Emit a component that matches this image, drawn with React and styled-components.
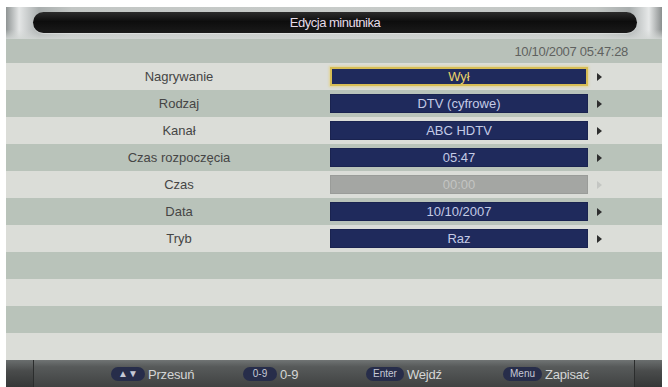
import styled, { createGlobalStyle } from "styled-components";

const GlobalStyle = createGlobalStyle`
  html, body {
    margin: 0;
    padding: 0;
    background: #ffffff;
  }
  body {
    font-family: "Liberation Sans", Arial, sans-serif;
  }
`;

const rows = [
  { label: "Nagrywanie", value: "Wył", focused: true },
  { label: "Rodzaj", value: "DTV (cyfrowe)" },
  { label: "Kanał", value: "ABC HDTV" },
  { label: "Czas rozpoczęcia", value: "05:47" },
  { label: "Czas", value: "00:00", disabled: true },
  { label: "Data", value: "10/10/2007" },
  { label: "Tryb", value: "Raz" },
];

const hints = [
  { key: "▲▼", text: "Przesuń" },
  { key: "0-9", text: "0-9" },
  { key: "Enter", text: "Wejdź" },
  { key: "Menu", text: "Zapisać" },
];

export default function App() {
  const emptyRows = [0, 1, 2, 3];
  return (
    <>
      <GlobalStyle />
      <Page>
        <Screen>
          <Header>
            <TitleBar>Edycja minutnika</TitleBar>
          </Header>
          <ClockRow>10/10/2007 05:47:28</ClockRow>
          {rows.map((row, i) => (
            <Row key={row.label} $dark={i % 2 === 1}>
              <Label>{row.label}</Label>
              <ValueBox $focused={row.focused} $disabled={row.disabled}>
                {row.value}
              </ValueBox>
              <Arrow $disabled={row.disabled} />
            </Row>
          ))}
          {/* empty lines below the list keep the striping going */}
          {emptyRows.map((n) => (
            <Row key={n} $dark={n % 2 === 0} />
          ))}
          <Footer>
            <FooterCap />
            <HintBar>
              {hints.map((h) => (
                <Hint key={h.key}>
                  <KeyBadge>{h.key}</KeyBadge>
                  <HintText>{h.text}</HintText>
                </Hint>
              ))}
            </HintBar>
            <FooterCap $right />
          </Footer>
        </Screen>
      </Page>
    </>
  );
}

const Page = styled.div`
  width: 668px;
  height: 387px;
  padding: 7px 6px 0 6px;
  box-sizing: border-box;
  background: #ffffff;
  overflow: hidden;
`;

const Screen = styled.div`
  display: flex;
  flex-direction: column;
  width: 656px;
  background: #d9dcd7;
`;

const Header = styled.div`
  height: 32px;
  padding: 5px 25px 0 27px;
  box-sizing: border-box;
  background:
    linear-gradient(to bottom, rgba(255, 255, 255, 0) 70%, rgba(210, 214, 212, 0.9) 100%),
    linear-gradient(
      to right,
      #8f9494 0,
      #e4e6e6 2%,
      #a9aeae 5%,
      #c2c6c4 10%,
      #c7cbc9 50%,
      #c2c6c4 90%,
      #a9aeae 95%,
      #e6e8e8 98%,
      #8a8e8e 100%
    );
`;

const TitleBar = styled.div`
  height: 21px;
  border-radius: 11px;
  background: linear-gradient(to bottom, #2c2c2c 0, #0d0d0d 45%, #1a1a1a 100%);
  box-shadow: 0 1px 1px rgba(255, 255, 255, 0.4);
  color: #e6dbe8;
  font-size: 13px;
  letter-spacing: -0.5px;
  line-height: 21px;
  text-align: center;
`;

const ClockRow = styled.div`
  height: 24px;
  padding-right: 34px;
  background: #b8c1b9;
  color: #5f615f;
  font-size: 13px;
  line-height: 26px;
  text-align: right;
  letter-spacing: -0.3px;
`;

const Row = styled.div`
  display: flex;
  align-items: center;
  height: 27px;
  padding-left: 60px;
  background: ${(p) => (p.$dark ? "#b9c3ba" : "#dbddd8")};
`;

const Label = styled.div`
  width: 226px;
  text-align: center;
  color: #454545;
  font-size: 13px;
`;

const ValueBox = styled.div`
  margin-left: 38px;
  width: 258px;
  height: 19px;
  box-sizing: border-box;
  border: ${(p) => (p.$focused ? "2px solid #d7bd55" : "1px solid #1a2350")};
  box-shadow: ${(p) => (p.$focused ? "0 0 2px 1px rgba(230, 210, 120, 0.7)" : "none")};
  background: ${(p) => (p.$disabled ? "#a4a6a3" : "#1f2a5c")};
  border-color: ${(p) => (p.$disabled ? "#9a9c99" : undefined)};
  color: ${(p) => (p.$focused ? "#ead46a" : p.$disabled ? "#c3c4c2" : "#c4cbe6")};
  font-size: 13px;
  line-height: ${(p) => (p.$focused ? "15px" : "17px")};
  text-align: center;
`;

const Arrow = styled.div`
  margin-left: 9px;
  width: 0;
  height: 0;
  border-top: 4px solid transparent;
  border-bottom: 4px solid transparent;
  border-left: 5px solid ${(p) => (p.$disabled ? "#c4c6c3" : "#2e2e2e")};
`;

const Footer = styled.div`
  display: flex;
  height: 27px;
  background: linear-gradient(to bottom, #707474 0, #575a5a 25%, #404242 100%);
`;

const FooterCap = styled.div`
  width: 27px;
  background: linear-gradient(to bottom, #6a6e6e 0, #4a4c4c 40%, #353737 100%);
  border-right: ${(p) => (p.$right ? "none" : "1px solid #2b2d2d")};
  border-left: ${(p) => (p.$right ? "1px solid #2b2d2d" : "none")};
`;

const HintBar = styled.div`
  flex: 1;
  display: grid;
  grid-template-columns: 132px 123px 137px auto;
  align-items: center;
  padding-left: 77px;
  padding-top: 1px;
`;

const Hint = styled.div`
  display: flex;
  align-items: center;
  gap: 3px;
`;

const KeyBadge = styled.span`
  display: inline-block;
  min-width: 20px;
  height: 14px;
  padding: 0 7px;
  border-radius: 7px;
  background: #272d4a;
  color: #c6c9d6;
  font-size: 10px;
  line-height: 14px;
  text-align: center;
`;

const HintText = styled.span`
  color: #d4d6d6;
  font-size: 13px;
  letter-spacing: -0.2px;
`;
